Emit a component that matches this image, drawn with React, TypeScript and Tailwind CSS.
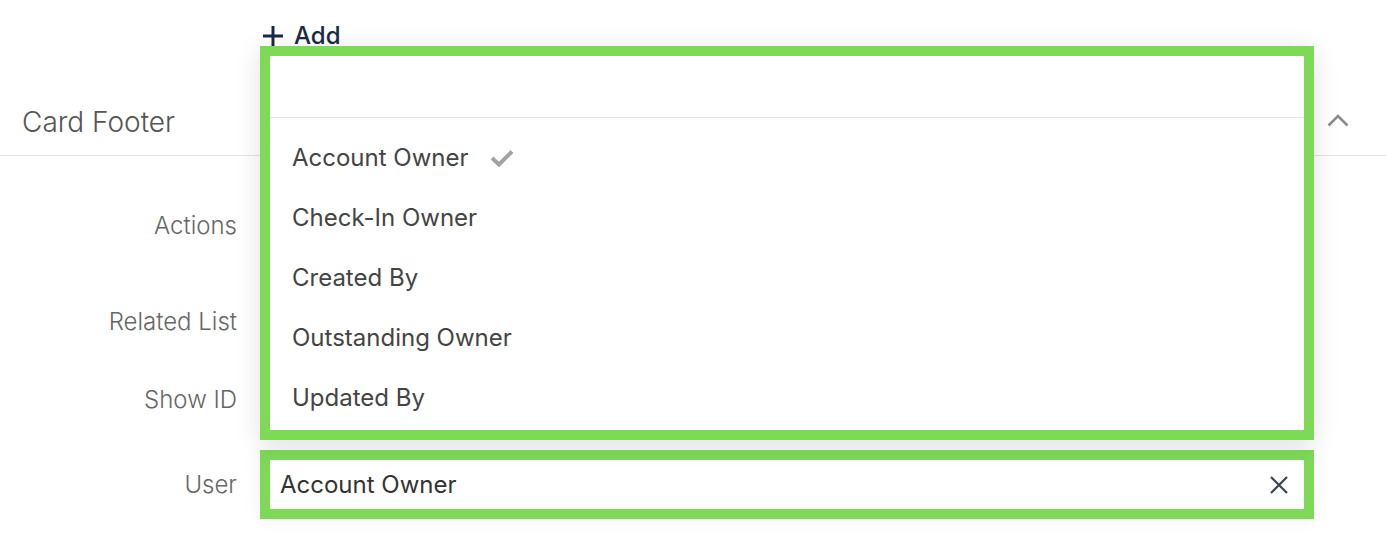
import React from "react";

const items = ["Account Owner", "Check-In Owner", "Created By", "Outstanding Owner", "Updated By"];

function Check() {
  return (
    <svg width="26" height="18" viewBox="0 0 26 18" className="ml-[20px]">
      <polyline points="3,9 10,15.5 23,2.5" fill="none" stroke="#a3a3a3" strokeWidth="4" strokeLinejoin="miter" />
    </svg>
  );
}

function Row({ label, children, h, mt }: { label: string; children?: React.ReactNode; h: string; mt: string }) {
  return (
    <div className={`flex items-center ${h} ${mt}`}>
      <div className="w-[237px] text-right text-[24px] font-light text-[#666]">{label}</div>
      <div className="ml-[23px] w-[1054px] h-full">{children}</div>
    </div>
  );
}

export default function App() {
  return (
    <div className="relative w-[1386px] h-[546px] overflow-hidden bg-white font-['Inter',sans-serif]">
      <div className="h-[46px] pl-[262px] pt-[20px] flex items-start">
        <div className="flex items-center text-[#1a2a44] text-[24px] font-medium leading-[32px]">
          <svg width="22" height="22" viewBox="0 0 22 22" className="mr-[10px]">
            <path d="M11 1v20M1 11h20" stroke="#1a2a44" strokeWidth="3" />
          </svg>
          <span>Add</span>
        </div>
      </div>
      <div className="h-[110px] border-b border-[#e4e4e8] flex items-center justify-between pl-[22px] pr-[37px]">
        <span className="text-[28px] font-light text-[#555] mt-[43px]">Card Footer</span>
        <svg width="22" height="13" viewBox="0 0 22 13" className="mt-[40px]">
          <polyline points="1.5,11.5 11,2 20.5,11.5" fill="none" stroke="#8a8a8a" strokeWidth="2.5" />
        </svg>
      </div>
      <div className="flex flex-col pt-[40px]">
        <Row label="Actions" h="h-[60px]" mt="" />
        <Row label="Related List" h="h-[60px]" mt="mt-[36px]" />
        <Row label="Show ID" h="h-[60px]" mt="mt-[18px]" />
        <Row label="User" h="h-[69px]" mt="mt-[20px]">
          <div className="h-full border-[10px] border-[#7ed957] bg-white flex items-center justify-between pl-[10px] pr-[16px] shadow-[0_0_18px_rgba(0,0,0,0.06)]">
            <span className="text-[24px] text-[#333]">Account Owner</span>
            <svg width="18" height="18" viewBox="0 0 18 18">
              <path d="M1 1L17 17M17 1L1 17" stroke="#3d4350" strokeWidth="2.2" />
            </svg>
          </div>
        </Row>
      </div>
      <div className="absolute left-[260px] top-[46px] w-[1054px] h-[394px] border-[10px] border-[#7ed957] bg-white shadow-[0_4px_24px_rgba(0,0,0,0.12)] flex flex-col">
        <div className="h-[62px] border-b border-[#e4e4e8]" />
        <div className="flex flex-col pt-[10px]">
          {items.map((it, i) => (
            <div key={it} className="h-[60px] flex items-center pl-[22px] text-[24px] text-[#444]">
              <span>{it}</span>
              {i === 0 && <Check />}
            </div>
          ))}
        </div>
      </div>
    </div>
  );
}
